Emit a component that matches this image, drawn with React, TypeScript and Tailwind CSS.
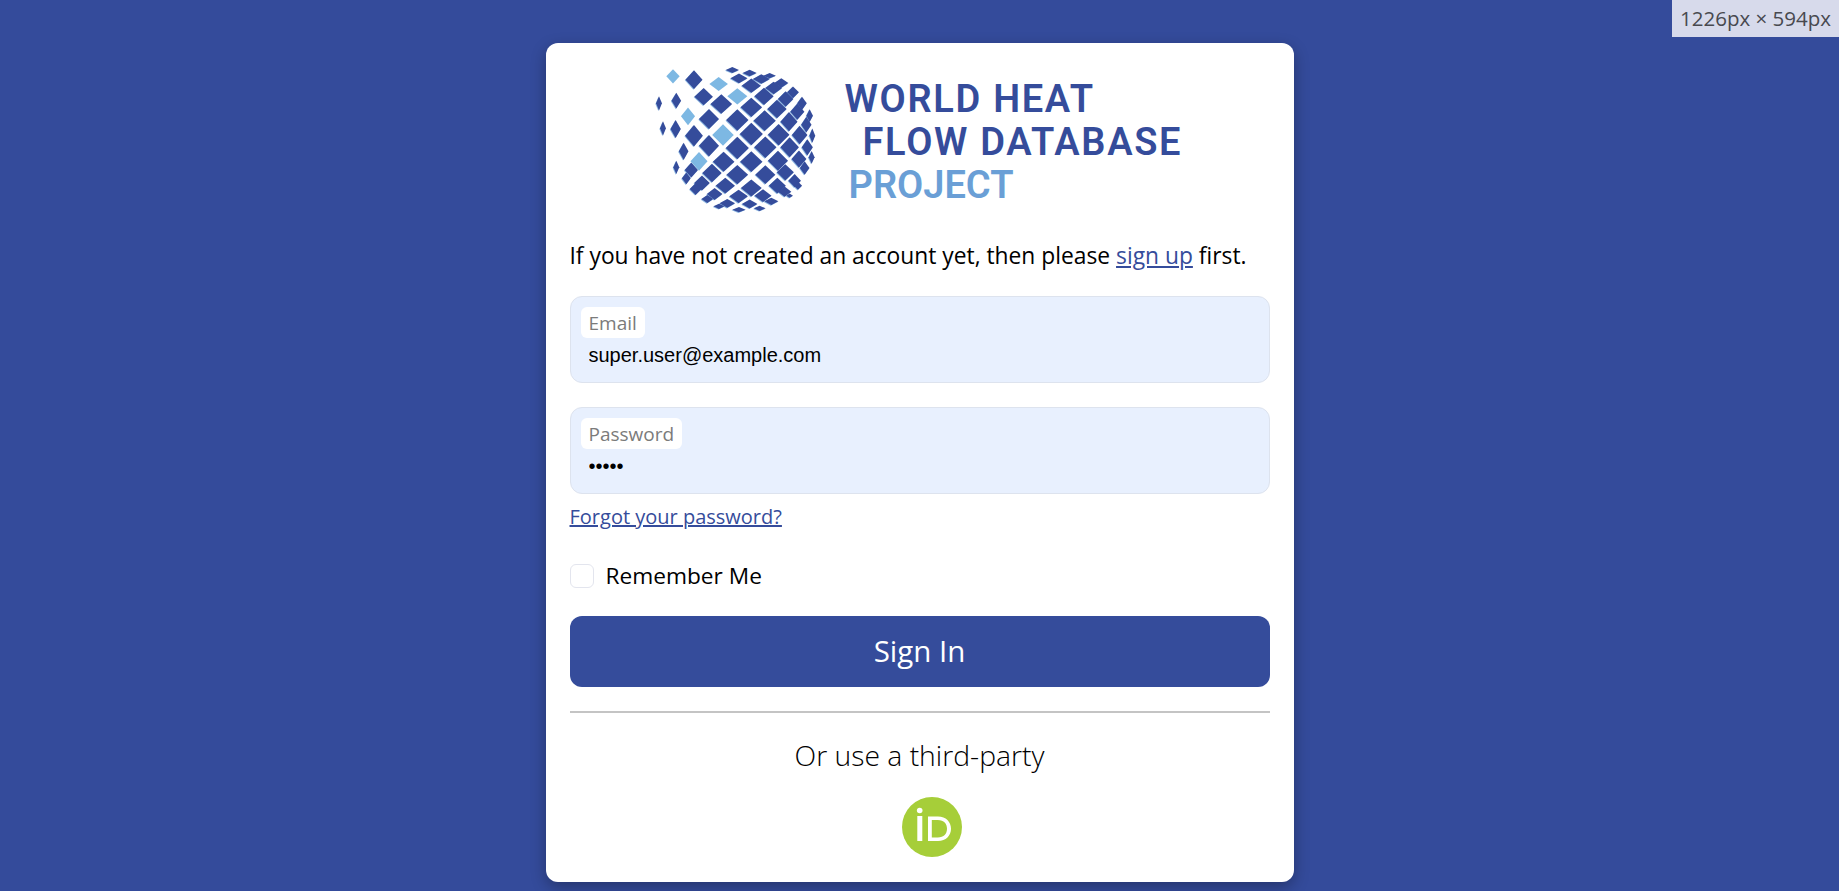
// tile centres and half diagonals: x, y, half width, half height
const darkTiles = [
  [278, 58, 17, 7], [330, 67, 18, 8], [390, 75, 16, 6],
  [298, 83, 22, 12], [365, 85, 22, 12], [425, 97, 18, 12],
  [335, 105, 25, 18], [402, 112, 22, 16], [460, 125, 15, 15],
  [373, 137, 25, 22], [438, 145, 20, 20], [487, 158, 12, 17],
  [335, 170, 28, 25], [412, 175, 25, 24], [473, 183, 18, 21], [510, 195, 8, 16],
  [293, 208, 29, 28], [375, 210, 29, 27], [448, 213, 22, 25], [500, 222, 13, 20],
  [335, 250, 30, 29], [417, 252, 28, 28], [480, 253, 20, 24], [518, 255, 7, 18],
  [293, 292, 30, 29], [377, 290, 29, 28], [450, 290, 24, 26], [503, 290, 14, 21],
  [335, 333, 29, 27], [415, 330, 26, 26], [478, 325, 19, 22], [516, 320, 7, 16],
  [252, 333, 28, 26], [293, 372, 28, 25], [377, 372, 26, 24], [437, 365, 22, 21], [495, 352, 12, 17],
  [217, 367, 25, 24], [335, 412, 27, 22], [257, 405, 25, 20], [413, 405, 22, 20], [465, 390, 16, 17],
  [187, 397, 20, 19], [155, 358, 17, 19], [140, 383, 11, 15], [168, 415, 15, 15],
  [297, 437, 24, 17], [370, 435, 22, 16], [225, 430, 20, 15], [435, 423, 17, 13], [475, 405, 10, 10],
  [203, 445, 15, 10], [263, 458, 20, 11], [330, 460, 20, 11], [395, 452, 18, 9],
  [238, 467, 14, 6], [298, 477, 17, 6], [360, 473, 15, 6], [450, 435, 8, 5],
  [163, 87, 22, 24], [192, 138, 24, 22], [110, 150, 12, 20], [58, 158, 7, 18],
  [70, 233, 7, 18], [108, 235, 13, 23], [163, 255, 23, 28], [132, 302, 12, 22],
  [110, 350, 7, 17], [208, 285, 26, 28], [208, 205, 26, 26], [245, 160, 28, 25],
];

const lightTiles = [
  [100, 77, 17, 18], [237, 100, 24, 18], [293, 137, 26, 21],
  [145, 197, 18, 23], [250, 253, 28, 28], [178, 332, 22, 24],
];

function tile([x, y, w, h]: number[]) {
  const sw = w * 1.12 + 1;
  const sh = h * 1.12 + 1;
  return `${x},${y - sh} ${x + sw},${y} ${x},${y + sh} ${x - sw},${y}`;
}

function Globe() {
  return (
    <svg width="165" height="152" viewBox="40 40 495 456" className="shrink-0">
      {darkTiles.map((d, idx) => (
        <polygon key={`s-${idx}`} points={tile(d)} fill="#8fb9e3" transform="translate(-2 2)" />
      ))}
      {darkTiles.map((d, idx) => (
        <polygon key={`d-${idx}`} points={tile(d)} fill="#354c9b" />
      ))}
      {lightTiles.map((d, idx) => (
        <polygon key={`l-${idx}`} points={tile(d)} fill="#7db8e3" />
      ))}
    </svg>
  );
}

function Field({ label, value, password }: { label: string; value: string; password?: boolean }) {
  return (
    <div className="h-[87px] rounded-xl border border-[#dde3ee] bg-[#e8f0fe] pl-[10px] pt-[10px]">
      <div className="flex">
        <span className="h-[31px] rounded-md bg-white px-2 text-[19px] leading-[33px] text-[#7b7b7b]">{label}</span>
      </div>
      <input
        readOnly
        type={password ? "password" : "text"}
        value={value}
        className="mt-[4px] block h-[26px] w-full bg-transparent pl-[8px] font-['Liberation_Sans',sans-serif] text-[20px] leading-[26px] text-black outline-none"
      />
    </div>
  );
}

export default function App() {
  return (
    <div className="relative flex h-[891px] justify-center overflow-hidden bg-[#344b9b] pt-[43px] font-['Open_Sans',sans-serif]">
      <div className="absolute right-0 top-0 flex h-[37px] w-[167px] items-center justify-center bg-[#d7daeb] text-[20.500px] text-[#48494f]">
        1226px × 594px
      </div>

      <div className="h-[839px] w-[748px] rounded-xl bg-white px-6 shadow-[0_5px_15px_rgba(0,0,0,0.3)]">
        <div className="flex h-[186px] items-start pl-[83px] pt-[21px]">
          <Globe />
          <div className="ml-[27px] mt-[14px] font-['Roboto',sans-serif] text-[38px] font-semibold leading-[43px] tracking-[1.700px] text-[#354c9b]">
            <div>WORLD HEAT</div>
            <div className="pl-[18px]">FLOW DATABASE</div>
            <div className="pl-[4px] tracking-normal text-[#6a9fd6]">PROJECT</div>
          </div>
        </div>

        <p className="mt-[10px] text-[22.800px] leading-[34px] text-black">
          If you have not created an account yet, then please{" "}
          <a href="#" className="text-[#354c9b] underline">sign up</a> first.
        </p>

        <div className="mt-[23px]">
          <Field label="Email" value="super.user@example.com" />
        </div>
        <div className="mt-[24px]">
          <Field label="Password" value="passw" password />
        </div>

        <a href="#" className="mt-[8px] block text-[20px] leading-[30px] text-[#354c9b] underline">
          Forgot your password?
        </a>

        <label className="mt-[29px] flex h-[30px] items-center">
          <span className="h-6 w-6 rounded-md border border-[#e3e5ee] bg-white" />
          <span className="ml-3 text-[22.700px] text-black">Remember Me</span>
        </label>

        <button className="mt-[25px] block h-[71px] w-full rounded-xl bg-[#354c9b] text-[29.500px] text-white">
          Sign In
        </button>

        <hr className="mt-[24px] border-t-2 border-[#c4c4c4]" />

        <div className="mt-[22px] text-center text-[28.300px] font-light leading-[40px] text-black">
          Or use a third-party
        </div>

        <div className="mt-[22px] flex justify-center pl-[24px]">
          <svg width="60" height="60" viewBox="0 0 60 60">
            <circle cx="30" cy="30" r="30" fill="#a6ce39" />
            <rect x="15.300" y="19" width="5" height="25" fill="#fff" />
            <circle cx="17.700" cy="13.500" r="2.800" fill="#fff" />
            <path
              d="M26 19.500h10c8 0 13 5.500 13 12.200S44 44 36 44H26V19.500Zm3.800 3.500v17.500h6c6.200 0 9.200-4 9.200-8.800s-3-8.700-9.200-8.700h-6Z"
              fill="#fff"
              fillRule="evenodd"
            />
          </svg>
        </div>
      </div>
    </div>
  );
}
